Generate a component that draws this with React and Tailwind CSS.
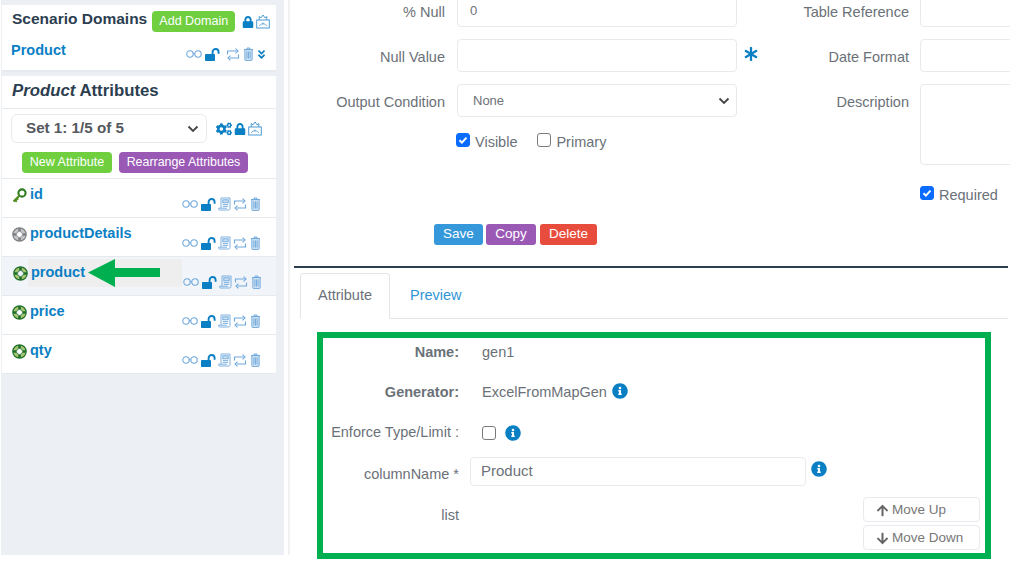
import { FaLock, FaCogs, FaAsterisk, FaInfoCircle, FaArrowUp, FaArrowDown, FaAngleDoubleDown } from 'react-icons/fa';

const blue = 'text-[#0b7fc4]';

const Glasses = () => (
  <svg width="16" height="8" viewBox="0 0 16 8" fill="none" stroke="#6fa8dc" strokeWidth="1.1">
    <circle cx="4" cy="4" r="3.2" />
    <circle cx="12" cy="4" r="3.2" />
    <path d="M7.2 3.5h1.6" />
  </svg>
);

const Unlock = () => (
  <svg width="15" height="13" viewBox="0 0 15 13" fill="none">
    <rect x="0" y="6" width="10" height="7" rx="0.8" fill="#0b7fc4" />
    <path d="M7.6 6.5V4a3 3 0 0 1 6 0v1.8" stroke="#0b7fc4" strokeWidth="1.9" />
  </svg>
);

const Retweet = () => (
  <svg width="14" height="13" viewBox="0 0 14 13" fill="none" stroke="#6fa8dc" strokeWidth="1.1">
    <path d="M1.5 6.5V3h9" />
    <path d="M9.5 0.7L12 3 9.5 5.3" />
    <path d="M12.5 6.5V10h-9" />
    <path d="M4.5 7.7L2 10l2.5 2.3" />
  </svg>
);

const Trash = () => (
  <svg width="11" height="14" viewBox="0 0 11 14" fill="#c9def0" stroke="#6fa8dc" strokeWidth="0.9">
    <path d="M1 2.5h9M4 2.5V1h3v1.5M1.8 2.5v10.2c0 .4.3.8.8.8h5.8c.5 0 .8-.4.8-.8V2.5z" />
    <path d="M3.9 4.5v7M5.5 4.5v7M7.1 4.5v7" />
  </svg>
);

const Doc = () => (
  <svg width="13" height="14" viewBox="0 0 13 14" fill="none" stroke="#6fa8dc" strokeWidth="0.9">
    <path d="M3 1h9v10.5c0 .8-.6 1.5-1.5 1.5h-9C.7 13 .5 12 .5 11.2H9" />
    <path d="M3 1v10" />
    <rect x="4.8" y="2.8" width="5.4" height="3" fill="#c9def0" />
    <path d="M4.8 7.6h5.4M4.8 9.4h5.4" />
  </svg>
);

const Robot = () => (
  <svg width="14" height="15" viewBox="0 0 14 15" fill="none" stroke="#4a9bd6" strokeWidth="1">
    <path d="M3.2 6V2.5l1.8 1.3L7 1l2 2.8 1.8-1.3V6" />
    <rect x="0.7" y="6" width="12.6" height="8" />
    <path d="M3.5 12c.4-3 6.6-3 7 0M7 8.5v2" strokeWidth="0.8" />
  </svg>
);

const Key = () => (
  <svg width="15" height="15" viewBox="0 0 15 15" fill="none">
    <circle cx="10" cy="5" r="3.6" stroke="#2e7d1f" strokeWidth="2.1" />
    <path d="M7.5 7.5L1.5 13.5M3 12l1.8 1.8M4.8 10.2l1.4 1.4" stroke="#4f8a1f" strokeWidth="2" />
  </svg>
);

const Ring = ({ dark, band }) => (
  <svg width="15" height="15" viewBox="0 0 15 15" fill="none">
    <circle cx="7.5" cy="7.5" r="5" stroke={band} strokeWidth="3" />
    <circle cx="7.5" cy="7.5" r="6.7" stroke={dark} strokeWidth="1.2" />
    <circle cx="7.5" cy="7.5" r="3.1" stroke={dark} strokeWidth="1" />
    <path d="M7.5 1v3M7.5 11v3M1 7.5h3M11 7.5h3" stroke={dark} strokeWidth="2.6" />
  </svg>
);

const AttrIcons = () => (
  <div className="flex items-center">
    <Glasses />
    <span className="ml-[3px] flex"><Unlock /></span>
    <span className="ml-[2px] flex"><Doc /></span>
    <span className="ml-[2px] flex"><Retweet /></span>
    <span className="ml-[3px] flex"><Trash /></span>
  </div>
);

const attrs = [
  { name: 'id', icon: 'key' },
  { name: 'productDetails', icon: 'grey' },
  { name: 'product', icon: 'ring', active: true },
  { name: 'price', icon: 'ring' },
  { name: 'qty', icon: 'ring' },
];

const AttrRow = ({ attr }) => (
  <div className={`relative flex h-[39px] border-b border-[#e6e9ee] pl-[10px] ${attr.active ? 'bg-[#f1f4f8] pr-[14px]' : 'bg-white pr-[15px]'}`}>
    <div className={`mt-[2px] flex h-[28px] items-center ${attr.active ? 'ml-[1px]' : ''}`}>
      {attr.icon === 'key' && <Key />}
      {attr.icon === 'grey' && <Ring dark="#7d7f82" band="#c4c6c8" />}
      {attr.icon === 'ring' && <Ring dark="#1d6f2b" band="#a9c66b" />}
      <span className={`flex h-[28px] items-center pl-[3px] text-[14.5px] font-bold ${blue} ${attr.active ? 'w-[154px] bg-[#eeeeee]' : ''}`}>{attr.name}</span>
    </div>
    <div className="ml-auto mt-[18px] self-start">
      <AttrIcons />
    </div>
  </div>
);

const FormRow = ({ label, h = 'h-[33px]', children }) => (
  <div className="flex">
    <label className="flex h-[33px] w-[160px] items-center justify-end pt-[5px] text-[14.5px] text-[#6b7178]">{label}</label>
    <div className={`ml-[12px] w-[280px] rounded border border-[#e8eaed] bg-white ${h}`}>{children}</div>
  </div>
);

const RightRow = ({ label, h = 'h-[33px]' }) => (
  <div className="flex">
    <label className="flex h-[33px] w-[144px] items-center justify-end pt-[5px] text-[14.5px] text-[#6b7178]">{label}</label>
    <div className={`ml-[11px] w-[120px] shrink-0 rounded border border-[#e8eaed] bg-white ${h}`} />
  </div>
);

const Check = ({ on }) => (
  <span className={`flex h-[14px] w-[14px] items-center justify-center rounded-[3px] border ${on ? 'border-[#0a6cff] bg-[#0a6cff]' : 'border-[#7a7a7a] bg-white'}`}>
    {on && (
      <svg width="10" height="10" viewBox="0 0 10 10" fill="none" stroke="white" strokeWidth="2">
        <path d="M1.5 5.2l2.4 2.4 4.6-5" />
      </svg>
    )}
  </span>
);

const Chevron = () => (
  <svg width="12" height="8" viewBox="0 0 12 8" fill="none" stroke="#444" strokeWidth="1.8">
    <path d="M1.5 1.5L6 6l4.5-4.5" />
  </svg>
);

const Sidebar = () => (
  <aside className="relative ml-[1px] h-[555px] w-[283px] shrink-0 bg-[#eceff4] pl-[1px] pr-[8px] pt-[5px]">
    <div className="h-[67px] border-b-2 border-[#e6e9ee] bg-white pl-[10px]">
      <div className="flex h-[27px] items-center pt-[6px]">
        <span className="-translate-y-[3px] whitespace-nowrap text-[15.5px] font-bold text-[#2c3e50]">Scenario Domains</span>
        <button className="ml-[5px] h-[21px] w-[83px] shrink-0 rounded bg-[#6fcf3f] text-[12.5px] text-white">Add Domain</button>
        <FaLock className={`ml-[7px] ${blue}`} size={12} />
        <span className="ml-[2px] flex"><Robot /></span>
      </div>
      <div className="mt-[8px] flex items-center">
        <span className={`-ml-[1px] text-[14.5px] font-bold ${blue}`}>Product</span>
        <div className="ml-auto mr-[9px] mt-[7px] flex items-center">
          <Glasses />
          <span className="ml-[3px] flex"><Unlock /></span>
          <span className="ml-[6px] flex"><Retweet /></span>
          <span className="ml-[3px] flex"><Trash /></span>
          <FaAngleDoubleDown className={`ml-[2px] ${blue}`} size={11} />
        </div>
      </div>
    </div>
    <div className="mt-[4px] flex h-[33px] items-center border-b border-[#e6e9ee] bg-white pb-[2px] pl-[10px] text-[16.8px] font-bold text-[#2c3e50]">
      <i>Product</i>
      <span className="ml-[4px]">Attributes</span>
    </div>
    <div className="h-[70px] border-b border-[#e6e9ee] bg-white">
      <div className="flex items-center pl-[9px] pt-[5px]">
        <div className="flex h-[29px] w-[196px] items-center rounded-md border border-[#e8eaed] pl-[14px] pr-[7px] text-[15.2px] font-bold text-[#55595e]">
          <span>Set 1: 1/5 of 5</span>
          <span className="ml-auto flex"><Chevron /></span>
        </div>
        <FaCogs className={`ml-[9px] ${blue}`} size={16} />
        <FaLock className={`ml-[2px] ${blue}`} size={12} />
        <span className="ml-[2px] flex"><Robot /></span>
      </div>
      <div className="mt-[9px] flex pl-[20px]">
        <button className="h-[21px] w-[90px] rounded bg-[#6fcf3f] text-[12.5px] text-white">New Attribute</button>
        <button className="ml-[7px] h-[21px] w-[129px] rounded bg-[#9b59b6] text-[12.4px] text-white">Rearrange Attributes</button>
      </div>
    </div>
    {attrs.map((a) => (
      <AttrRow key={a.name} attr={a} />
    ))}
    {/* annotation arrow pasted over the list */}
    <svg className="absolute left-[87px] top-[259px]" width="72" height="28" viewBox="0 0 72 28">
      <path d="M0 13.5L27 0v9h45v9H27v10z" fill="#00b050" />
    </svg>
  </aside>
);

const FormTop = () => (
  <div className="flex -translate-y-[6px]">
    <div className="flex w-[480px] shrink-0 flex-col gap-[12px]">
      <FormRow label="% Null">
        <div className="flex h-full items-center pl-[12px] text-[13px] text-[#6b7178]">0</div>
      </FormRow>
      <div className="relative">
        <FormRow label="Null Value" />
        <FaAsterisk className={`absolute left-[459px] top-[8px] ${blue}`} size={14} />
      </div>
      <FormRow label="Output Condition">
        <div className="flex h-full items-center pl-[15px] pr-[6px] text-[13px] text-[#6b7178]">
          <span>None</span>
          <span className="ml-auto flex"><Chevron /></span>
        </div>
      </FormRow>
      <div className="ml-[171px] mt-[3px] flex items-center text-[14.5px] text-[#6b7178]">
        <span className="-translate-y-[3px]"><Check on /></span>
        <span className="ml-[5px]">Visible</span>
        <span className="ml-[20px] -translate-y-[3px]"><Check /></span>
        <span className="ml-[5px]">Primary</span>
      </div>
    </div>
    <div className="flex flex-col gap-[12px]">
      <RightRow label="Table Reference" />
      <RightRow label="Date Format" />
      <RightRow label="Description" h="h-[81px]" />
      <div className="ml-[155px] mt-[8px] flex items-center text-[14.5px] text-[#6b7178]">
        <span className="-translate-y-[3px]"><Check on /></span>
        <span className="ml-[5px]">Required</span>
      </div>
    </div>
  </div>
);

const Info = () => <FaInfoCircle className={blue} size={16} />;

const Attribute = () => (
  <div className="ml-[32px] mt-[13px] h-[227px] w-[674px] border-[6px] border-[#00b050] text-[14.5px] text-[#6b7178]">
    <div className="mt-[1px] flex h-[28px] items-center">
      <span className="w-[136px] text-right font-bold">Name:</span>
      <span className="ml-[23px]">gen1</span>
    </div>
    <div className="mt-[12px] flex h-[28px] items-center">
      <span className="w-[136px] text-right font-bold">Generator:</span>
      <span className="ml-[23px]">ExcelFromMapGen</span>
      <span className="ml-[5px] flex -translate-y-[2px]"><Info /></span>
    </div>
    <div className="mt-[12px] flex h-[28px] items-center">
      <span className="w-[136px] text-right">Enforce Type/Limit :</span>
      <span className="ml-[23px]"><Check /></span>
      <span className="ml-[9px] flex"><Info /></span>
    </div>
    <div className="mt-[10px] flex items-start">
      <span className="flex h-[36px] w-[136px] items-center justify-end">columnName *</span>
      <div className="ml-[11px] flex h-[29px] w-[336px] items-center rounded border border-[#e8eaed] pl-[10px] text-[15px]">Product</div>
      <span className="ml-[5px] mt-[4px] flex"><Info /></span>
    </div>
    <div className="mt-[4px] flex items-start">
      <span className="mt-[8px] w-[136px] text-right">list</span>
      <div className="ml-auto mr-[5px] flex flex-col gap-[3px]">
        <button className="flex h-[25px] w-[117px] items-center rounded border border-[#e8eaed] pl-[12px] pt-[1px] text-[13.5px] text-[#777]">
          <FaArrowUp size={13} className="mr-[3px] text-[#666]" />Move Up
        </button>
        <button className="flex h-[25px] w-[117px] items-center rounded border border-[#e8eaed] pl-[12px] pt-[1px] text-[13.5px] text-[#777]">
          <FaArrowDown size={13} className="mr-[3px] text-[#666]" />Move Down
        </button>
      </div>
    </div>
  </div>
);

export default function App() {
  return (
    <div className="flex h-[568px] w-[1010px] overflow-hidden bg-white font-['Liberation_Sans',Arial,sans-serif]">
      <Sidebar />
      <main className="relative ml-[1px] w-[725px] overflow-hidden">
        {/* page gutter strip beside the sidebar */}
        <div className="absolute left-[3px] top-0 h-[555px] w-[2px] bg-[#f1f2f4]" />
        <div className="h-[266px]">
          <FormTop />
        </div>
        <div className="absolute left-[149px] top-[224px] flex gap-[3px] text-[13.5px] text-white">
          <button className="h-[21px] w-[49px] rounded-[3px] bg-[#3498db]">Save</button>
          <button className="h-[21px] w-[50px] rounded-[3px] bg-[#9b59b6]">Copy</button>
          <button className="ml-[1px] h-[21px] w-[57px] rounded-[3px] bg-[#e74c3c]">Delete</button>
        </div>
        <div className="ml-[9px] h-[2px] w-[714px] bg-[#2c3e50]" />
        <div className="ml-[15px] mt-[5px] flex h-[46px] w-[708px] border-b border-[#e3e5e8] text-[14.5px]">
          <div className="flex h-[46px] w-[90px] items-center justify-center rounded-t border border-[#e3e5e8] border-b-white bg-white text-[#6b7178]">Attribute</div>
          <div className="ml-[20px] flex h-[45px] items-center text-[#2f97d6]">Preview</div>
        </div>
        <Attribute />
      </main>
    </div>
  );
}
